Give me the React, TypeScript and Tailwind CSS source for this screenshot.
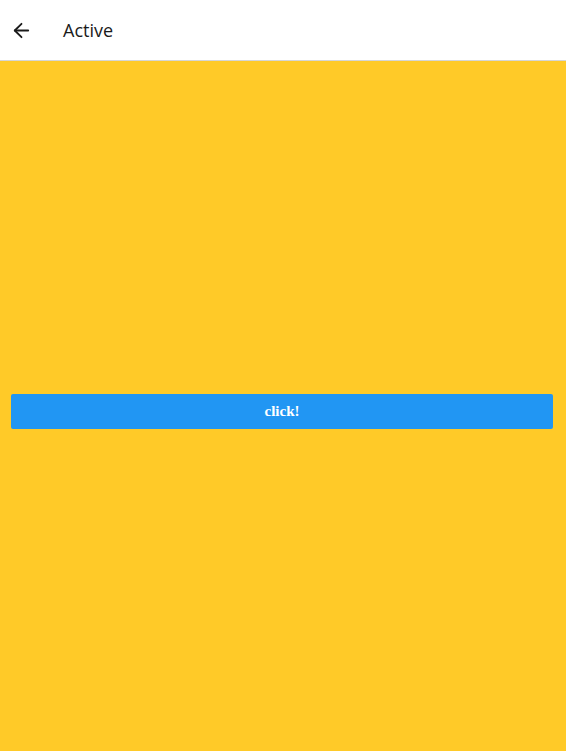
import { ArrowLeft } from "lucide-react";

export default function App() {
  return (
    <div className="flex h-[751px] w-full flex-col bg-[#ffca28]">
      {/* App bar */}
      <header className="flex h-[61px] shrink-0 items-center border-b border-[#d6d6d6] bg-white">
        <button className="ml-[9px] flex h-6 w-6 items-center justify-center text-[#1a1a1a]">
          <ArrowLeft size={23} strokeWidth={1.9} />
        </button>
        <h1 className="ml-[30px] font-['Open_Sans','Noto_Sans',sans-serif] text-[18px] font-medium text-[#1a1a1a]">
          Active
        </h1>
      </header>

      {/* Body */}
      <main className="flex flex-1 flex-col justify-center pl-[11px] pr-[13px] pt-[11px]">
        <button className="h-[35px] w-full rounded-[2px] bg-[#2196f3] font-['Liberation_Serif',serif] text-[15px] font-bold text-white">
          click!
        </button>
      </main>
    </div>
  );
}
